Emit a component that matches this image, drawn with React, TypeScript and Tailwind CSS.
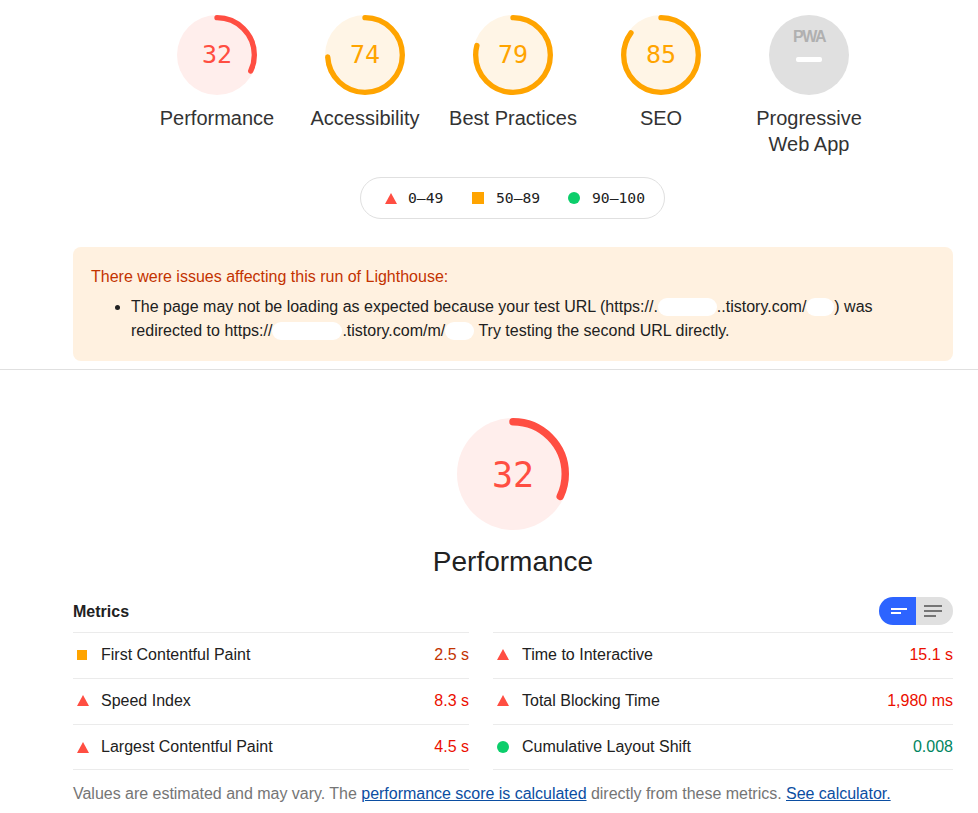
import React from 'react';

const MONO = 'font-["DejaVu_Sans_Mono",monospace]';

interface GaugeProps {
  score: number;
  size: number;
  tone: 'red' | 'orange';
}

const tones = {
  red: { bg: '#ffeeec', stroke: '#ff4e42', text: 'text-[#ff4e42]' },
  orange: { bg: '#fff5e6', stroke: '#ffa400', text: 'text-[#ffa400]' },
};

const Gauge: React.FC<GaugeProps> = ({ score, size, tone }) => {
  const c = tones[tone];
  const r = 56;
  const circ = 2 * Math.PI * r;
  return (
    <div className={`relative ${size === 80 ? 'w-20 h-20' : 'w-[112px] h-[112px]'}`}>
      <svg viewBox="0 0 120 120" className="w-full h-full block -rotate-90">
        <circle cx="60" cy="60" r="60" fill={c.bg} />
        <circle
          cx="60"
          cy="60"
          r={r}
          fill="none"
          stroke={c.stroke}
          strokeWidth="8"
          strokeLinecap="round"
          strokeDasharray={`${(score / 100) * circ} ${circ}`}
        />
      </svg>
      <div
        className={`absolute inset-0 flex items-center justify-center ${MONO} ${c.text} ${
          size === 80 ? 'text-[25px]' : 'text-[35px] pt-[2px]'
        }`}
      >
        {score}
      </div>
    </div>
  );
};

const Triangle = ({ className = '' }: { className?: string }) => (
  <svg viewBox="0 0 12 11" className={`w-3 h-[11px] block ${className}`}>
    <polygon points="6,0 12,11 0,11" fill="#ff4e42" />
  </svg>
);

const Blob = ({ w }: { w: string }) => (
  <span className={`inline-block h-[18px] align-[-4px] bg-white rounded-full ${w}`} />
);

const ScoreItem = ({ label, children }: { label: React.ReactNode; children: React.ReactNode }) => (
  <div className="w-[148px] flex flex-col items-center">
    {children}
    <div className="mt-[10px] text-[20px] leading-[26px] text-center text-[#333333]">{label}</div>
  </div>
);

const Metric = ({
  icon,
  label,
  value,
  color,
  last,
  gap,
}: {
  icon: React.ReactNode;
  label: string;
  value: string;
  color: string;
  last?: boolean;
  gap: string;
}) => (
  <div
    className={`h-[46px] flex items-center border-t border-[#ebebeb] ${last ? 'border-b' : 'pb-[2px]'}`}
  >
    <div className={`pl-1 flex-none ${gap}`}>{icon}</div>
    <div className="flex-1 text-[#212121]">{label}</div>
    <div className={color}>{value}</div>
  </div>
);

const Square = () => <div className="w-[10px] h-[10px] bg-[#ffa400]" />;
const Dot = () => <div className="w-3 h-3 rounded-full bg-[#0cce6b]" />;

export default function App() {
  return (
    <div className="w-[978px] h-[813px] overflow-hidden bg-white font-['Liberation_Sans',Arial,sans-serif] text-base leading-6">
      <div className="ml-[73px] w-[880px] pt-[15px]">
        <div className="flex justify-center">
          <ScoreItem label="Performance">
            <Gauge score={32} size={80} tone="red" />
          </ScoreItem>
          <ScoreItem label="Accessibility">
            <Gauge score={74} size={80} tone="orange" />
          </ScoreItem>
          <ScoreItem label="Best Practices">
            <Gauge score={79} size={80} tone="orange" />
          </ScoreItem>
          <ScoreItem label="SEO">
            <Gauge score={85} size={80} tone="orange" />
          </ScoreItem>
          <ScoreItem label={<>Progressive<br />Web App</>}>
            <div className="w-20 h-20 rounded-full bg-[#e0e0e0] flex flex-col items-center pt-[13px]">
              <div className="text-[16px] leading-[18px] font-bold tracking-[-1.5px] text-[#b0b0b0]">PWA</div>
              <div className="mt-[11px] w-[26px] h-[5px] rounded-[2px] bg-white" />
            </div>
          </ScoreItem>
        </div>

        <div className="mt-5 flex justify-center">
          <div className={`mr-px h-[42px] w-[305px] border border-[#e0e0e0] rounded-[21px] flex items-center pl-6 text-[14.7px] text-[#212121] ${MONO}`}>
            <Triangle />
            <span className="ml-[11px] w-[64px]">0–49</span>
            <div className="w-3 h-3 bg-[#ffa400]" />
            <span className="ml-3 w-[72px]">50–89</span>
            <Dot />
            <span className="ml-3">90–100</span>
          </div>
        </div>

        <div className="mt-7 h-[114px] rounded-lg bg-[#fff1e0] px-[18px] pt-[18px] text-[#212121]">
          <div className="text-[#c33300]">There were issues affecting this run of Lighthouse:</div>
          <ul className="mt-[6px] pl-10 list-disc">
            <li>
              The page may not be loading as expected because your test URL (https://.<Blob w="w-[59px]" />..tistory.com/<Blob w="w-[28px]" />) was
              <br />
              redirected to https://<Blob w="w-[70px]" />.tistory.com/m/<Blob w="w-[29px]" /> Try testing the second URL directly.
            </li>
          </ul>
        </div>
      </div>

      <div className="mt-2 h-px bg-[#e0e0e0]" />

      <div className="ml-[73px] w-[880px] pt-12">
        <div className="flex flex-col items-center">
          <Gauge score={32} size={112} tone="red" />
          <div className="mt-[14px] text-[28px] leading-9 text-[#212121]">Performance</div>
        </div>

        <div className="mt-[17px] h-7 flex items-center justify-between">
          <div className="pt-[2px] font-bold text-[#212121]">Metrics</div>
          <div className="flex w-[74px] h-7 rounded-full overflow-hidden">
            <div className="w-[37px] bg-[#2d64ff] flex items-center justify-end pr-[9px]">
              <svg width="16" height="6" viewBox="0 0 16 6" className="block">
                <rect x="0" y="0" width="16" height="2" fill="#fff" />
                <rect x="0" y="4" width="10" height="2" fill="#fff" />
              </svg>
            </div>
            <div className="flex-1 bg-[#e0e0e0] flex items-center justify-start pl-2">
              <svg width="18" height="12" viewBox="0 0 18 12" className="block">
                <rect x="0" y="0" width="18" height="2" fill="#757575" />
                <rect x="0" y="5" width="18" height="2" fill="#757575" />
                <rect x="0" y="10" width="12" height="2" fill="#757575" />
              </svg>
            </div>
          </div>
        </div>

        <div className="mt-[7px] flex">
          <div className="w-[396px]">
            <Metric gap="w-7" icon={<Square />} label="First Contentful Paint" value="2.5 s" color="text-[#c33300]" />
            <Metric gap="w-7" icon={<Triangle />} label="Speed Index" value="8.3 s" color="text-[#eb0f00]" />
            <Metric gap="w-7" icon={<Triangle />} label="Largest Contentful Paint" value="4.5 s" color="text-[#eb0f00]" last />
          </div>
          <div className="ml-6 w-[460px]">
            <Metric gap="w-[29px]" icon={<Triangle />} label="Time to Interactive" value="15.1 s" color="text-[#eb0f00]" />
            <Metric gap="w-[29px]" icon={<Triangle />} label="Total Blocking Time" value="1,980 ms" color="text-[#eb0f00]" />
            <Metric gap="w-[29px]" icon={<Dot />} label="Cumulative Layout Shift" value="0.008" color="text-[#008560]" last />
          </div>
        </div>

        <div className="mt-3 text-[#757575] whitespace-nowrap tracking-[-0.02px]">
          Values are estimated and may vary. The{' '}
          <a className="text-[#0b4ea2] underline">performance score is calculated</a> directly from these metrics.{' '}
          <a className="text-[#0b4ea2] underline">See calculator.</a>
        </div>
      </div>
    </div>
  );
}
